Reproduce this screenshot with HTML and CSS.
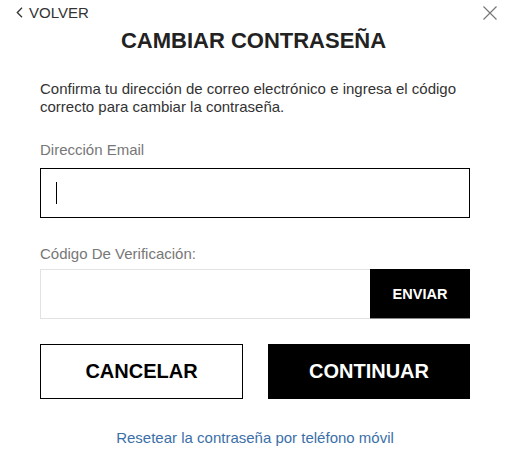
FILE: index.html
```html
<!DOCTYPE html>
<html lang="es">
<head>
<meta charset="utf-8">
<title>Cambiar contraseña</title>
<link rel="stylesheet" href="styles.css">
</head>
<body>
<div class="modal">
  <div class="topbar">
    <a class="back" href="#"><svg class="chev" width="7" height="11" viewBox="0 0 7 11"><path d="M6 0.8 L1.3 5.5 L6 10.2" fill="none" stroke="#333" stroke-width="1.3"/></svg><span>VOLVER</span></a>
    <svg class="close" width="14" height="14" viewBox="0 0 14 14"><path d="M0.5 0.5 L13.5 13.5 M13.5 0.5 L0.5 13.5" stroke="#777" stroke-width="1.2"/></svg>
  </div>
  <h1 class="title">CAMBIAR CONTRASEÑA</h1>
  <div class="content">
    <p class="intro">Confirma tu dirección de correo electrónico e ingresa el código correcto para cambiar la contraseña.</p>
    <label class="label">Dirección Email</label>
    <div class="email-box"><span class="caret"></span></div>
    <label class="label label-code">Código De Verificación:</label>
    <div class="code-row">
      <div class="code-input"></div>
      <button class="send">ENVIAR</button>
    </div>
    <div class="actions">
      <button class="btn btn-outline">CANCELAR</button>
      <button class="btn btn-solid">CONTINUAR</button>
    </div>
    <a class="reset" href="#">Resetear la contraseña por teléfono móvil</a>
  </div>
</div>
</body>
</html>
```
FILE: styles.css
```css
* { box-sizing: border-box; }
html, body { margin: 0; padding: 0; background: #fff; }
body { font-family: "Liberation Sans", Arial, sans-serif; color: #333; width: 507px; height: 472px; overflow: hidden; }
.topbar { display: flex; justify-content: space-between; align-items: center; padding: 5px 10px 0 16px; height: 20px; }
.back { display: flex; align-items: center; gap: 6px; text-decoration: none; color: #333; font-size: 15px; line-height: 16px; }
.chev { display: block; }
.close { display: block; }
.title { margin: 9px 0 0; text-align: center; font-size: 22px; line-height: 24px; font-weight: bold; color: #222; }
.content { padding: 0 37px 0 40px; }
.intro { margin: 27px 0 0; font-size: 15px; line-height: 18px; color: #333; }
.label { display: block; margin-top: 26px; font-size: 15px; line-height: 16px; color: #777; }
.label-code { margin-top: 28px; }
.email-box { margin-top: 10px; height: 50px; width: 430px; border: 1px solid #000; position: relative; }
.caret { position: absolute; left: 15px; top: 13px; width: 1px; height: 22px; background: #000; }
.code-row { display: flex; margin-top: 7px; width: 430px; height: 50px; }
.code-input { flex: 1; border: 1px solid #e2e2e2; border-right: none; }
.send { width: 100px; background: #000; color: #fff; border: none; border-bottom: 1px solid #888; font-family: "Liberation Sans", Arial, sans-serif; font-weight: bold; font-size: 14.5px; padding: 0; }
.actions { display: flex; justify-content: space-between; margin-top: 25px; width: 430px; }
.btn { width: 203px; height: 55px; font-family: "Liberation Sans", Arial, sans-serif; font-weight: bold; font-size: 20px; padding: 0; }
.btn-outline { background: #fff; border: 1px solid #000; color: #000; }
.btn-solid { width: 202px; background: #000; border: none; color: #fff; }
.reset { display: block; margin-top: 31px; width: 430px; text-align: center; font-size: 15px; line-height: 16px; color: #3b6fa8; text-decoration: none; }
```
